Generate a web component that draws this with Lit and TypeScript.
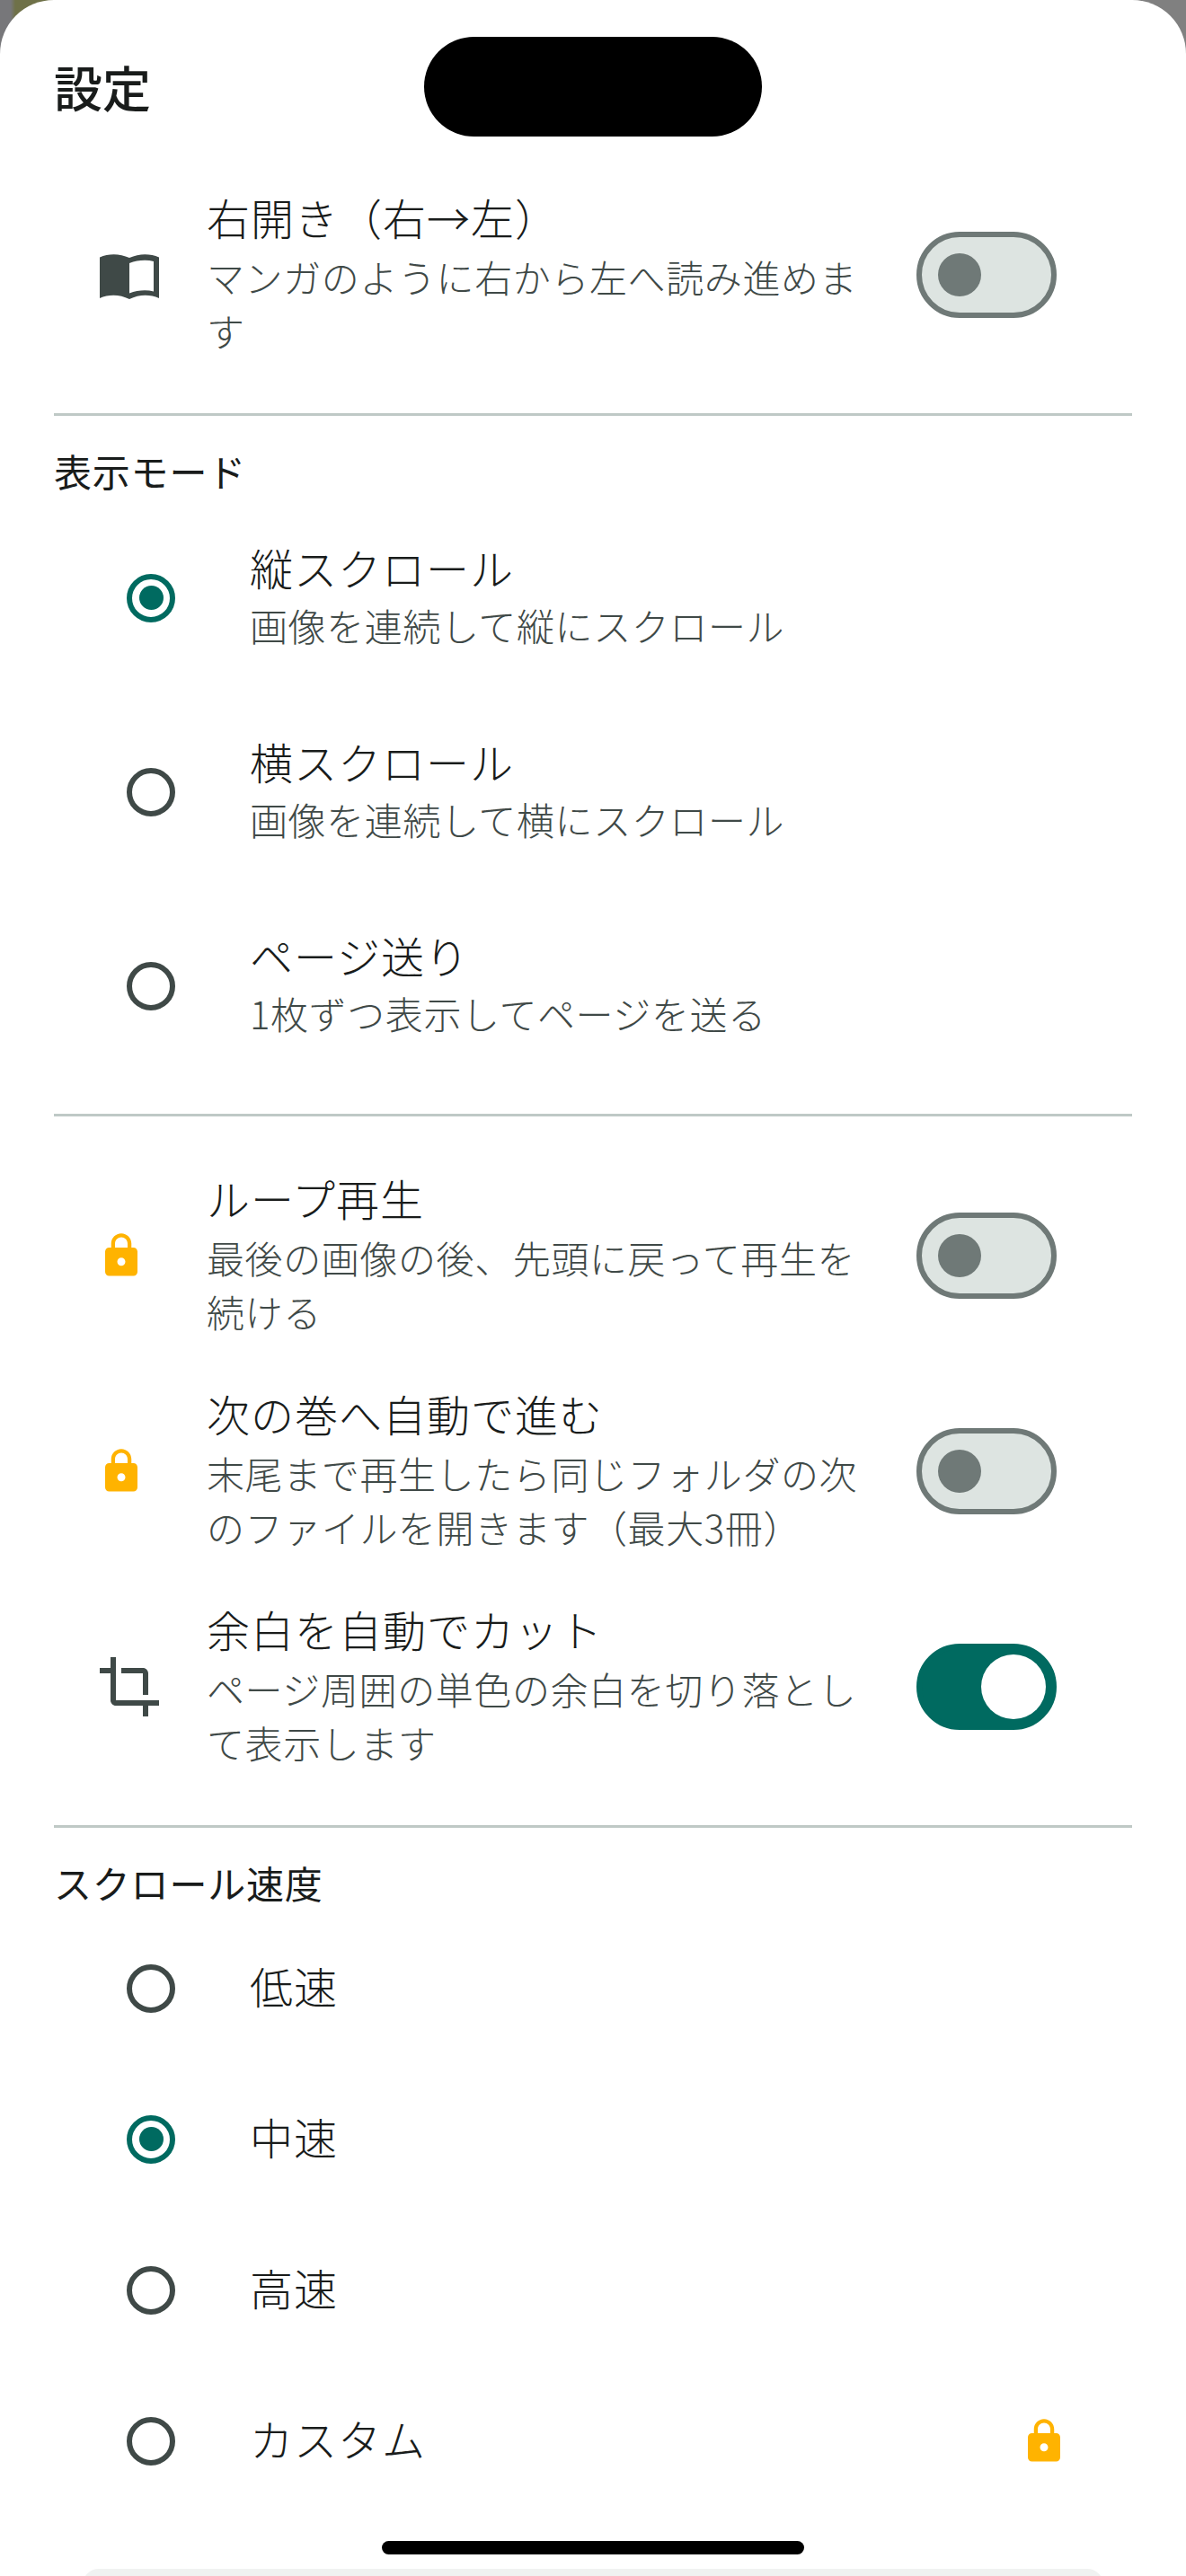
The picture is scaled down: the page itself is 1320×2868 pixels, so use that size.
import { LitElement, html, css } from "lit";
import { customElement } from "lit/decorators.js";

const lock = html`<svg class="lock" viewBox="0 0 24 24"><path fill="#FFB300" d="M18 8h-1V6c0-2.76-2.24-5-5-5S7 3.24 7 6v2H6c-1.1 0-2 .9-2 2v10c0 1.1.9 2 2 2h12c1.1 0 2-.9 2-2V10c0-1.1-.9-2-2-2zm-6 9c-1.1 0-2-.9-2-2s.9-2 2-2 2 .9 2 2-.9 2-2 2zm3.1-9H8.9V6c0-1.71 1.39-3.1 3.1-3.1 1.71 0 3.1 1.39 3.1 3.1v2z"/></svg>`;
const book = html`<svg class="book" viewBox="0 0 66 50"><path fill="#3F4947" fill-rule="evenodd" d="M0 3.5C10 -1 22 -1 33 4C44 -1 56 -1 66 3.5V49C56 44.5 44 44.5 33 50C22 44.5 10 44.5 0 49ZM33 10V43.5C42 40 52 39.5 60 41.5V8C52 6 42 6.5 33 10Z"/></svg>`;
const crop = html`<svg class="icon" viewBox="0 0 24 24"><path fill="#3F4947" d="M17 15h2V7c0-1.1-.9-2-2-2H9v2h8v8zM7 17V1H5v4H1v2h4v10c0 1.1.9 2 2 2h10v4h2v-4h4v-2H7z"/></svg>`;

@customElement("app-root")
export class AppRoot extends LitElement {
  static styles = css`
    :host {
      display: block;
      width: 1320px;
      height: 2868px;
      position: relative;
      overflow: hidden;
      background: linear-gradient(90deg, #77777a 0, #77777a 12px, #6f7148 17px, #6f7148 60px, #808080 61px);
      font-family: "Noto Sans CJK JP", "Noto Sans", sans-serif;
      font-weight: 300;
      color: #191c1b;
    }
    .sheet {
      height: 2868px;
      background: #fff;
      border-radius: 60px 60px 0 0;
      display: flex;
      flex-direction: column;
      box-sizing: border-box;
    }
    .notch {
      position: absolute;
      left: 472px;
      top: 41px;
      width: 376px;
      height: 111px;
      background: #000;
      border-radius: 56px;
    }
    .home {
      position: absolute;
      left: 425px;
      top: 2829px;
      width: 470px;
      height: 15px;
      background: #000;
      border-radius: 8px;
    }
    .peek {
      position: absolute;
      left: 92px;
      top: 2860px;
      width: 1136px;
      height: 20px;
      background: #f0f2f1;
      border-radius: 18px 18px 0 0;
    }
    h1 {
      margin: 0;
      height: 198px;
      padding-left: 60px;
      padding-bottom: 4px;
      box-sizing: border-box;
      display: flex;
      align-items: center;
      font-size: 54px;
      font-weight: 500;
      line-height: 1;
    }
    .switchrow {
      height: 240px;
      display: flex;
      align-items: center;
      flex: none;
    }
    .first { height: 216px; }
    .iconcell {
      width: 230px;
      flex: none;
      display: flex;
      justify-content: center;
      padding-left: 58px;
      box-sizing: border-box;
    }
    .iconcell svg { display: block; }
    .iconcell .lock { margin-right: 18px; }
    .body { width: 740px; flex: none; padding-bottom: 6px; }
    .title { font-size: 48px; line-height: 66px; letter-spacing: 1px; margin-bottom: 4px; }
    .sub { font-size: 42px; line-height: 60px; letter-spacing: 0.6px; color: #3f4947; }
    .toggle {
      margin-left: 50px;
      width: 156px;
      height: 96px;
      box-sizing: border-box;
      border: 6px solid #6f7977;
      border-radius: 48px;
      background: #dde4e1;
      display: flex;
      align-items: center;
      padding-left: 18px;
      flex: none;
    }
    .toggle i { display: block; width: 48px; height: 48px; border-radius: 50%; background: #6f7977; }
    .toggle.on { background: #006a60; border-color: #006a60; padding-left: 66px; }
    .toggle.on i { width: 72px; height: 72px; background: #fff; }
    .lock { width: 54px; height: 54px; }
    .book { width: 66px; height: 50px; margin-top: 4px; }
    .icon { width: 72px; height: 72px; }
    .rule { height: 3px; margin: 0 60px; background: #bfc9c6; flex: none; }
    .r1 { margin-top: 46px; }
    .r2 { margin-top: 36px; }
    .r3 { margin-top: 34px; }
    .gap { height: 35px; flex: none; }
    .section {
      font-size: 42px;
      font-weight: 400;
      line-height: 60px;
      letter-spacing: 0.8px;
      padding-left: 60px;
      margin-top: 31px;
      padding-bottom: 2px;
    }
    .radiorow { display: flex; align-items: center; flex: none; }
    .radiorow.tall { height: 216px; }
    .radiorow.short { height: 168px; }
    .radio {
      margin-left: 141px;
      margin-top: 3px;
      width: 54px;
      height: 54px;
      box-sizing: border-box;
      border: 6px solid #3f4947;
      border-radius: 50%;
      display: flex;
      align-items: center;
      justify-content: center;
      flex: none;
    }
    .radio.on { border-color: #006a60; }
    .radio.on i { display: block; width: 27px; height: 27px; border-radius: 50%; background: #006a60; }
    .radiobody { margin-left: 83px; flex: 1; padding-bottom: 4px; }
    .radiobody .title { margin-bottom: 0; }
    .tall .radiobody .title { margin-bottom: 2px; }
    .radiorow .lock { margin-right: 131px; margin-top: 3px; }
  `;

  private sw(title: string, sub: string, icon: unknown, on = false, cls = "") {
    return html`<div class="switchrow ${cls}">
      <div class="iconcell">${icon}</div>
      <div class="body"><div class="title">${title}</div><div class="sub">${sub}</div></div>
      <div class="toggle ${on ? "on" : ""}"><i></i></div>
    </div>`;
  }

  private radio(size: string, title: string, sub: string, on = false, locked = false) {
    return html`<div class="radiorow ${size}">
      <div class="radio ${on ? "on" : ""}">${on ? html`<i></i>` : ""}</div>
      <div class="radiobody">
        <div class="title">${title}</div>
        ${sub ? html`<div class="sub">${sub}</div>` : ""}
      </div>
      ${locked ? lock : ""}
    </div>`;
  }

  render() {
    return html`<div class="sheet">
        <h1>設定</h1>
        ${this.sw("右開き（右→左）", "マンガのように右から左へ読み進めます", book, false, "first")}
        <div class="rule r1"></div>
        <div class="section">表示モード</div>
        ${this.radio("tall", "縦スクロール", "画像を連続して縦にスクロール", true)}
        ${this.radio("tall", "横スクロール", "画像を連続して横にスクロール")}
        ${this.radio("tall", "ページ送り", "1枚ずつ表示してページを送る")}
        <div class="rule r2"></div>
        <div class="gap"></div>
        ${this.sw("ループ再生", "最後の画像の後、先頭に戻って再生を続ける", lock)}
        ${this.sw("次の巻へ自動で進む", "末尾まで再生したら同じフォルダの次のファイルを開きます（最大3冊）", lock)}
        ${this.sw("余白を自動でカット", "ページ周囲の単色の余白を切り落として表示します", crop, true)}
        <div class="rule r3"></div>
        <div class="section">スクロール速度</div>
        ${this.radio("short", "低速", "")}
        ${this.radio("short", "中速", "", true)}
        ${this.radio("short", "高速", "")}
        ${this.radio("short", "カスタム", "", false, true)}
      </div>
      <div class="notch"></div>
      <div class="peek"></div>
      <div class="home"></div>`;
  }
}
